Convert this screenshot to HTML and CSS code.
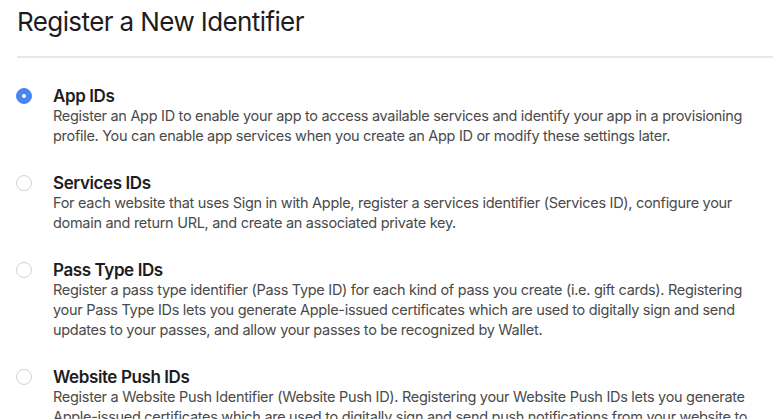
FILE: index.html
```html
<!DOCTYPE html>
<html lang="en">
<head>
    <meta charset="UTF-8">
    <meta name="viewport" content="width=device-width, initial-scale=1.0">
    <title>Register a New Identifier</title>
    <link rel="stylesheet" href="styles.css">
</head>
<body>
    <div class="page">
        <h1>Register a New Identifier</h1>
        <hr class="divider">

        <div class="options">
            <label class="option">
                <input type="radio" name="identifier" value="app" checked>
                <span class="radio"></span>
                <span class="option-text">
                    <span class="option-title">App IDs</span>
                    <span class="option-desc">Register an App ID to enable your app to access available services and identify your app in a provisioning profile. You can enable app services when you create an App ID or modify these settings later.</span>
                </span>
            </label>

            <label class="option">
                <input type="radio" name="identifier" value="services">
                <span class="radio"></span>
                <span class="option-text">
                    <span class="option-title">Services IDs</span>
                    <span class="option-desc">For each website that uses Sign in with Apple, register a services identifier (Services ID), configure your domain and return URL, and create an associated private key.</span>
                </span>
            </label>

            <label class="option">
                <input type="radio" name="identifier" value="pass">
                <span class="radio"></span>
                <span class="option-text">
                    <span class="option-title">Pass Type IDs</span>
                    <span class="option-desc">Register a pass type identifier (Pass Type ID) for each kind of pass you create (i.e. gift cards). Registering your Pass Type IDs lets you generate Apple-issued certificates which are used to digitally sign and send updates to your passes, and allow your passes to be recognized by Wallet.</span>
                </span>
            </label>

            <label class="option">
                <input type="radio" name="identifier" value="push">
                <span class="radio"></span>
                <span class="option-text">
                    <span class="option-title">Website Push IDs</span>
                    <span class="option-desc">Register a Website Push Identifier (Website Push ID). Registering your Website Push IDs lets you generate Apple-issued certificates which are used to digitally sign and send push notifications from your website to macOS.</span>
                </span>
            </label>
        </div>
    </div>
</body>
</html>
```

FILE: styles.css
```css
body {
    margin: 0;
    font-family: Inter, "Helvetica Neue", Arial, sans-serif;
    background-color: #ffffff;
    color: #1d1d1f;
    overflow: hidden;
}
.page {
    padding: 0 0 0 17px;
}
h1 {
    margin: 0;
    padding-top: 4px;
    font-size: 26px;
    font-weight: 400;
    line-height: 36px;
    letter-spacing: -0.6px;
    color: #1d1d1f;
}
.divider {
    margin: 16px 0 0 0;
    border: none;
    border-top: 2px solid #e8e8e8;
}
.options {
    padding-top: 28px;
}
.option {
    display: flex;
    align-items: flex-start;
    margin-bottom: 27px;
    cursor: pointer;
}
.option input {
    display: none;
}
.radio {
    flex: none;
    width: 14px;
    height: 14px;
    margin: 2px 21px 0 -1px;
    border: 1px solid #d2d2d2;
    border-radius: 50%;
    background-color: #ffffff;
    position: relative;
}
.option input:checked + .radio {
    background-color: #4a86ef;
    border-color: #4a86ef;
}
.option input:checked + .radio::after {
    content: "";
    position: absolute;
    left: 5px;
    top: 5px;
    width: 4px;
    height: 4px;
    border-radius: 50%;
    background-color: #ffffff;
}
.option-text {
    display: flex;
    flex-direction: column;
    padding-right: 20px;
}
.option-title {
    font-size: 17px;
    font-weight: 600;
    line-height: 20px;
    letter-spacing: -0.4px;
    color: #1d1d1f;
}
.option-desc {
    font-size: 14.5px;
    line-height: 20px;
    letter-spacing: -0.3px;
    color: #4a4a4a;
}
```
